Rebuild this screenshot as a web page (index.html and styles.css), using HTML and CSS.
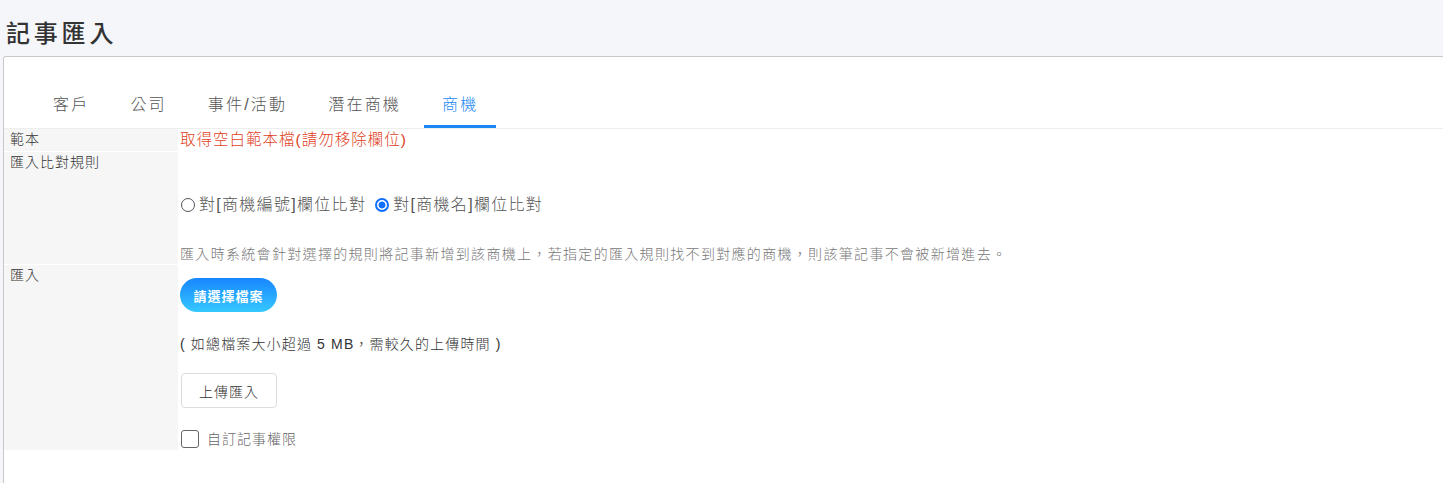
FILE: index.html
```html
<!DOCTYPE html>
<html lang="zh-Hant">
<head>
<meta charset="utf-8">
<title>記事匯入</title>
<link rel="stylesheet" href="styles.css">
</head>
<body>
<header class="page-head">
  <h1 class="page-title">記事匯入</h1>
</header>
<section class="card">
  <nav class="tabs">
    <a class="tab">客戶</a>
    <a class="tab">公司</a>
    <a class="tab">事件/活動</a>
    <a class="tab">潛在商機</a>
    <a class="tab active">商機</a>
  </nav>
  <div class="form">
    <div class="label">範本</div>
    <div class="field"><a class="template-link">取得空白範本檔(請勿移除欄位)</a></div>

    <div class="label">匯入比對規則</div>
    <div class="field rule-field">
      <div class="radios">
        <label class="radio"><input type="radio" name="rule" class="radio-input"><span>對[商機編號]欄位比對</span></label>
        <label class="radio"><input type="radio" name="rule" class="radio-input" checked><span>對[商機名]欄位比對</span></label>
      </div>
      <p class="desc">匯入時系統會針對選擇的規則將記事新增到該商機上，若指定的匯入規則找不到對應的商機，則該筆記事不會被新增進去。</p>
    </div>

    <div class="label">匯入</div>
    <div class="field import-field">
      <button class="btn-pick">請選擇檔案</button>
      <p class="note">( 如總檔案大小超過 5 MB，需較久的上傳時間 )</p>
      <button class="btn-upload">上傳匯入</button>
      <label class="check"><input type="checkbox" class="check-input"><span>自訂記事權限</span></label>
    </div>
  </div>
</section>
</body>
</html>
```

FILE: styles.css
```css
* { box-sizing: border-box; }
html, body { margin: 0; padding: 0; }
body {
  background: #f5f6fa;
  font-family: "Liberation Sans", "Noto Sans CJK TC", sans-serif;
  color: #333;
  overflow: hidden;
  height: 483px;
}
.page-head {
  height: 56px;
  padding: 18px 0 0 6px;
}
.page-title {
  margin: 0;
  font-size: 24px;
  line-height: 32px;
  font-weight: 500;
  letter-spacing: 3.8px;
  color: #333;
}
.card {
  margin-left: 3px;
  margin-right: -10px;
  background: #fff;
  border: 1px solid #c8c8c8;
  border-bottom: 0;
  border-radius: 3px 0 0 0;
  height: 427px;
  padding-top: 26px;
}
.tabs {
  display: flex;
  gap: 5px;
  padding-left: 31px;
  border-bottom: 1px solid #eeeeee;
}
.tab {
  padding: 10px 18px 8px;
  font-size: 16px;
  line-height: 24px;
  letter-spacing: 2.2px;
  font-weight: 300;
  color: #555;
  border-bottom: 3px solid transparent;
}
.tab.active {
  color: #1a87f5;
  border-bottom-color: #1a87f5;
}
.form {
  display: grid;
  grid-template-columns: 174px 1fr;
  column-gap: 2px;
  row-gap: 1px;
}
.label {
  background: #f6f6f6;
  font-size: 14px;
  line-height: 20px;
  letter-spacing: 1px;
  padding: 0 0 0 6px;
  color: #333;
  font-weight: 300;
}
.field { min-width: 0; }
.template-link {
  display: block;
  font-size: 15.5px;
  line-height: 22px;
  letter-spacing: 1px;
  color: #e0401c;
  font-weight: 300;
}
.rule-field { padding-top: 41px; }
.radios {
  display: flex;
  align-items: center;
  height: 24px;
  gap: 8px;
}
.radio {
  display: flex;
  align-items: center;
  font-size: 16px;
  line-height: 24px;
  letter-spacing: 1.3px;
  color: #555;
  font-weight: 300;
}
.radio-input {
  appearance: none;
  -webkit-appearance: none;
  width: 14px;
  height: 14px;
  margin: 0 4px 0 1px;
  border: 1px solid #555;
  border-radius: 50%;
  background: #fff;
}
.radio-input:checked {
  border: 2px solid #0f6fff;
  background: radial-gradient(circle, #0f6fff 0 3.2px, #fff 3.8px);
}
.desc {
  margin: 27px 0 0;
  font-size: 14px;
  line-height: 20px;
  letter-spacing: 1.32px;
  color: #777;
  font-weight: 300;
}
.import-field { padding-top: 13px; padding-bottom: 1px; }
.btn-pick {
  display: block;
  width: 97px;
  height: 34px;
  border: 0;
  border-radius: 17px;
  background: linear-gradient(180deg, #1786ff 0%, #36c8ff 100%);
  color: #fff;
  font-family: inherit;
  font-size: 13px;
  font-weight: 700;
  letter-spacing: 1px;
  padding: 0;
}
.note {
  margin: 22px 0 0;
  font-size: 14px;
  line-height: 20px;
  letter-spacing: 1.15px;
  color: #333;
  font-weight: 300;
}
.btn-upload {
  display: block;
  margin: 19px 0 0 1px;
  width: 96px;
  height: 35px;
  background: #fff;
  border: 1px solid #dddddd;
  border-radius: 4px;
  font-family: inherit;
  font-size: 14px;
  letter-spacing: 1px;
  color: #333;
  padding: 0;
  font-weight: 300;
}
.check {
  display: flex;
  align-items: center;
  margin-top: 21px;
  font-size: 14px;
  line-height: 20px;
  letter-spacing: 1px;
  color: #666;
  font-weight: 300;
}
.check-input {
  appearance: none;
  -webkit-appearance: none;
  width: 18px;
  height: 18px;
  margin: 0 8px 0 1px;
  border: 1px solid #666;
  border-radius: 3px;
  background: #fff;
}
```
